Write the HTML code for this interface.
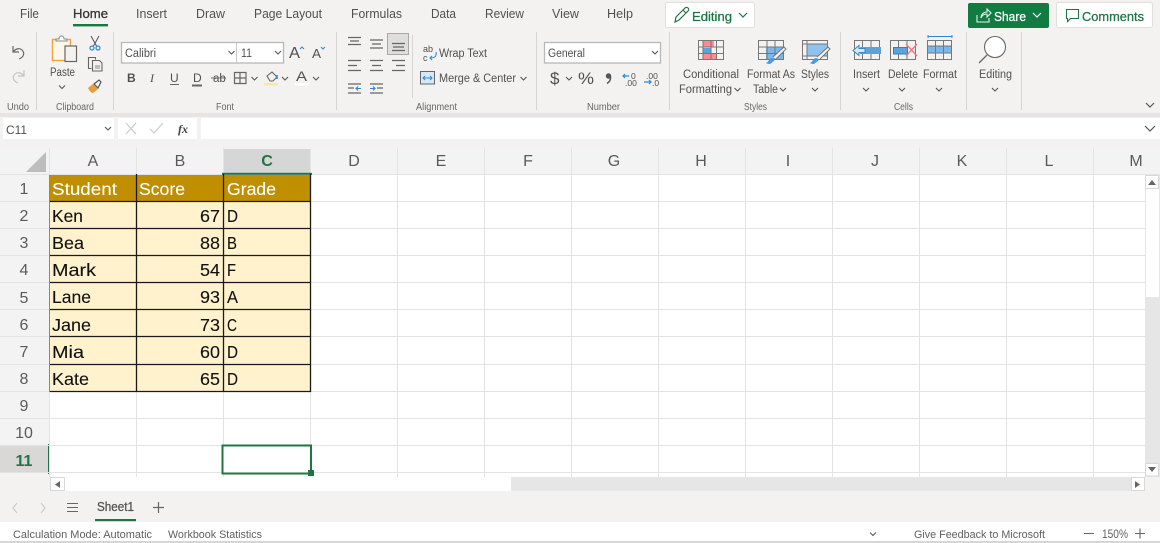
<!DOCTYPE html>
<html><head><meta charset="utf-8"><title>Excel</title>
<style>
html,body{margin:0;padding:0;background:#fff;width:1160px;height:543px;overflow:hidden}
svg{display:block;filter:blur(.3px)}
text{font-family:"Liberation Sans",sans-serif;fill:#505050}
.t{font-size:12.5px}
.r{font-size:11.5px}
.g{font-size:10px;fill:#666}
.c{font-size:17.5px;fill:#111;stroke:#111;stroke-width:.1px}
.w{font-size:17.5px;fill:#fff;stroke:#fff;stroke-width:.1px}
.h{font-size:16px;fill:#5a5a5a;text-anchor:middle}
.s{font-size:11px;fill:#5f5f5f}
.gt{font-size:12.5px;fill:#217346;stroke:#217346;stroke-width:.25px}
.i{fill:none;stroke:#666;stroke-width:1.2}
.b{fill:none;stroke:#666;stroke-width:1.1}
</style></head><body>
<svg width="1160" height="543" viewBox="0 0 1160 543" xmlns="http://www.w3.org/2000/svg">
<defs>
<path id="ch" d="M-3-1.5 0 1.500 3-1.500" fill="none" stroke="#555" stroke-width="1.100"/>
</defs>
<!-- base -->
<rect width="1160" height="543" fill="#fff"/>
<rect width="1160" height="113" fill="#f3f2f1"/>
<rect y="113" width="1160" height="4" fill="#e6e5e4"/>
<rect y="117" width="1160" height="31" fill="#f3f2f1"/>
<!-- tabs -->
<text class="t" x="20" y="18" textLength="19" lengthAdjust="spacingAndGlyphs">File</text>
<text class="t" x="73" y="18" textLength="35" lengthAdjust="spacingAndGlyphs" style="fill:#333;stroke:#333;stroke-width:.3px">Home</text>
<rect x="73" y="24" width="35" height="2.400" fill="#107c41"/>
<text class="t" x="136" y="18" textLength="31" lengthAdjust="spacingAndGlyphs">Insert</text>
<text class="t" x="196" y="18" textLength="29" lengthAdjust="spacingAndGlyphs">Draw</text>
<text class="t" x="254" y="18" textLength="68" lengthAdjust="spacingAndGlyphs">Page Layout</text>
<text class="t" x="351" y="18" textLength="51" lengthAdjust="spacingAndGlyphs">Formulas</text>
<text class="t" x="431" y="18" textLength="25" lengthAdjust="spacingAndGlyphs">Data</text>
<text class="t" x="485" y="18" textLength="39" lengthAdjust="spacingAndGlyphs">Review</text>
<text class="t" x="552" y="18" textLength="27" lengthAdjust="spacingAndGlyphs">View</text>
<text class="t" x="607" y="18" textLength="26" lengthAdjust="spacingAndGlyphs">Help</text>
<!-- Editing -->
<rect x="665.500" y="2.500" width="89" height="25" rx="2" fill="#fff" stroke="#e1dfdd"/>
<path d="M675 22l1-5 9-9a2 2 0 0 1 3 3l-9 9zM683 10l3 3" fill="none" stroke="#217346" stroke-width="1.200"/>
<text class="gt" x="692" y="21" textLength="40" lengthAdjust="spacingAndGlyphs">Editing</text>
<path d="M739 13l4 4 4-4" fill="none" stroke="#217346" stroke-width="1.200"/>
<!-- Share -->
<rect x="968" y="3" width="81" height="25" rx="2" fill="#107c41"/>
<path d="M977 15v7h12v-4M981 18c0-4 3-6 6-6v-3l4 4-4 4v-3c-3 0-5 1-6 4z" fill="none" stroke="#e8f2ec" stroke-width="1.100"/>
<text x="994" y="21" textLength="32" lengthAdjust="spacingAndGlyphs" style="fill:#fff;stroke:#fff;stroke-width:.25px;font-size:12.500px">Share</text>
<path d="M1033 13l4 4 4-4" fill="none" stroke="#fff" stroke-width="1.200"/>
<!-- Comments -->
<rect x="1056.500" y="2.500" width="96" height="25" rx="2" fill="#fff" stroke="#e1dfdd"/>
<path d="M1066.500 9.500h12v9h-8l-3 3v-3h-1z" fill="none" stroke="#217346" stroke-width="1.100"/>
<text class="gt" x="1082" y="21" textLength="62" lengthAdjust="spacingAndGlyphs">Comments</text>
<!-- separators -->
<g stroke="#d6d5d4">
<path d="M36.500 32V110M113.500 32V110M336.500 32V110M536.500 32V110M669.500 32V110M840.500 32V110M966.500 32V110M1021.500 32V110"/>
<path d="M412.500 35V98"/>
</g>
<!-- Undo -->
<path d="M13 46v6h6M13 52c3-4 7-4 9-2 3 3 2 7-3 9" class="i"/>
<path d="M24 70v6h-6M24 76c-3-4-7-4-9-2-3 3-2 7 3 9" fill="none" stroke="#c4c4c4" stroke-width="1.200"/>
<!-- Paste -->
<rect x="52.500" y="39.500" width="18" height="21" fill="#fdf6ea" stroke="#eda23f" stroke-width="1.400"/>
<path d="M56 41v-2h3c0-4 5-4 5 0h3v2z" fill="#fff" stroke="#888"/>
<rect x="65" y="46" width="11.500" height="15.500" fill="#f3f2f1" stroke="#666" stroke-width="1.200"/>
<text class="r" x="50" y="76" textLength="25" lengthAdjust="spacingAndGlyphs">Paste</text>
<use href="#ch" x="62" y="87"/>
<!-- Scissors -->
<path d="M91 36l5.500 10M99 36l-5.500 10" stroke="#555" fill="none"/>
<circle cx="92" cy="48" r="2" fill="none" stroke="#2b88d8" stroke-width="1.200"/>
<circle cx="98" cy="48" r="2" fill="none" stroke="#2b88d8" stroke-width="1.200"/>
<!-- Copy -->
<path d="M91.500 68.500h-3v-11h7v2" class="b"/>
<path d="M92.500 60.500h7l2.500 2.500v8h-9.500z" class="b"/>
<path d="M95 66h5M95 68h5" stroke="#888" fill="none"/>
<!-- Painter -->
<path d="M88 88l5-4 5 5-5 4c-2 0-4-3-5-5z" fill="#ed9a38"/>
<path d="M94 84l5-4 2 2-3 6z" fill="none" stroke="#555" stroke-width="1.200"/>
<!-- Font -->
<rect x="121.500" y="42.500" width="162" height="20.500" fill="#fff" stroke="#b8b8b8" stroke-width="1.300"/>
<path d="M236.500 43V63" stroke="#c8c8c8"/>
<text class="r" x="125" y="57" textLength="31" lengthAdjust="spacingAndGlyphs">Calibri</text>
<use href="#ch" x="231.500" y="52.500"/>
<text class="r" x="241" y="57" textLength="11" lengthAdjust="spacingAndGlyphs">11</text>
<use href="#ch" x="278" y="52.500"/>
<text x="289" y="58" style="font-size:16px" textLength="11" lengthAdjust="spacingAndGlyphs">A</text>
<path d="M300 49l2-2 2 2" fill="none" stroke="#2b88d8"/>
<text x="312" y="58" style="font-size:13px" textLength="9" lengthAdjust="spacingAndGlyphs">A</text>
<path d="M321 47l2 2 2-2" fill="none" stroke="#2b88d8"/>
<text x="127" y="82" style="font-size:12px;font-weight:bold">B</text>
<text x="150" y="82" style="font-size:12px;font-style:italic;font-family:'Liberation Serif',serif">I</text>
<text x="170" y="82" style="font-size:12px">U</text>
<path d="M170 84.500h9" stroke="#666"/>
<text x="193" y="82" style="font-size:12px">D</text>
<path d="M192 85.500h10" stroke="#666" stroke-width="2"/>
<text x="213" y="82" style="font-size:11.500px">ab</text>
<path d="M211 78h15" stroke="#666"/>
<path d="M234.500 72.500h11.500v11h-11.500zM240 72.500v11M234.500 78h11.500" class="i"/>
<use href="#ch" x="254.500" y="78.500"/>
<path d="M267 76l5-4 5 5-4 4h-3z" class="b"/>
<path d="M277 75v4" stroke="#2b88d8" stroke-width="1.500"/>
<rect x="264" y="83" width="14" height="2.500" fill="#f7e7ad"/>
<use href="#ch" x="285" y="78.500"/>
<text x="296" y="81" style="font-size:14px" textLength="11" lengthAdjust="spacingAndGlyphs">A</text>
<rect x="295" y="83" width="14" height="2.500" fill="#fff"/>
<use href="#ch" x="316" y="78.500"/>
<!-- Alignment -->
<rect x="387.500" y="33.500" width="21" height="21" fill="#dededd" stroke="#a8a8a8"/>
<g stroke="#666" stroke-width="1.300" fill="none">
<path d="M348 37.500h13M350 41h9M348 44.500h13"/>
<path d="M370 40h13M372 44h9M370 48h13"/>
<path d="M392 43.500h13M393 47h11M392 50.500h13"/>
<path d="M348 60.500h13M348 65.500h9M348 70.500h13"/>
<path d="M370 60.500h13M372 65.500h9M370 70.500h13"/>
<path d="M392 60.500h13M396 65.500h9M392 70.500h13"/>
<path d="M348 84h13M348 88h6M348 93h13"/>
<path d="M370 84h13M377 88h6M370 93h13"/>
</g>
<path d="M361 88.500h-5M358 86.500l-2 2 2 2M370 88.500h5M373 86.500l2 2-2 2" fill="none" stroke="#2b88d8" stroke-width="1.100"/>
<text x="423" y="52" style="font-size:9px">ab</text>
<text x="423" y="61" style="font-size:9px">c</text>
<path d="M436 52c1 5-2 6-6 6M432 56l-2 2 2 2" fill="none" stroke="#2b88d8" stroke-width="1.100"/>
<text class="r" x="439" y="57" textLength="48" lengthAdjust="spacingAndGlyphs">Wrap Text</text>
<rect x="420.500" y="71.500" width="14" height="12.500" fill="#d6e8f7" stroke="#666"/>
<path d="M423 78h9M425 76l-2 2 2 2M430 76l2 2-2 2" fill="none" stroke="#2b88d8"/>
<text class="r" x="439" y="82" textLength="77" lengthAdjust="spacingAndGlyphs">Merge &amp; Center</text>
<use href="#ch" x="523.500" y="78.500"/>
<!-- Number -->
<rect x="544.500" y="42.500" width="116" height="20.500" fill="#fff" stroke="#b8b8b8" stroke-width="1.300"/>
<text class="r" x="548" y="57" textLength="37" lengthAdjust="spacingAndGlyphs">General</text>
<use href="#ch" x="655" y="52.500"/>
<text x="550" y="84" style="font-size:17px">$</text>
<use href="#ch" x="569" y="78.500"/>
<text x="578" y="84" style="font-size:17px" textLength="16" lengthAdjust="spacingAndGlyphs">%</text>
<circle cx="608.500" cy="76" r="2.700" fill="#555"/>
<path d="M610.500 76.500c.3 3-1 5.500-3.500 7" fill="none" stroke="#555" stroke-width="1.500"/>
<text x="631" y="79" style="font-size:8.500px">0</text>
<text x="625" y="86" style="font-size:8.500px">.00</text>
<path d="M629 76h-6M625 74l-2 2 2 2" fill="none" stroke="#2b88d8" stroke-width="1.200"/>
<text x="646" y="79" style="font-size:8.500px">.00</text>
<text x="652" y="86" style="font-size:8.500px">.0</text>
<path d="M644 82h7M649 80l2 2-2 2" fill="none" stroke="#2b88d8" stroke-width="1.200"/>
<!-- CF icon -->
<rect x="703" y="41" width="11" height="6" fill="#f88b94"/>
<rect x="703" y="48" width="8" height="6" fill="#5ba3dd"/>
<rect x="703" y="54" width="14" height="6" fill="#f88b94"/>
<path d="M698.500 40.500h25v19h-25zM698.500 47h25M698.500 53.500h25M703 40.500v19M711 40.500v19M716.500 40.500v19" fill="none" stroke="#777"/>
<text class="r" x="683" y="78" textLength="56" lengthAdjust="spacingAndGlyphs">Conditional</text>
<text class="r" x="679" y="93" textLength="53" lengthAdjust="spacingAndGlyphs">Formatting</text>
<use href="#ch" x="737.500" y="89.500"/>
<!-- FT icon -->
<rect x="766" y="47" width="18" height="13" fill="#7ab8ec"/>
<path d="M758.500 40.500h25v19h-25zM758.500 47h25M758.500 53.500h25M767 40.500v19M775 40.500v19" fill="none" stroke="#777"/>
<path d="M770 64c-3 0-4-1-4-1 3-1 3-5 6-5 2 0 3 2 2 3z" fill="#4a9ce0"/>
<path d="M773 57l11-10 2 2-10 10" fill="#f3f2f1" stroke="#777"/>
<text class="r" x="747" y="78" textLength="48" lengthAdjust="spacingAndGlyphs">Format As</text>
<text class="r" x="753" y="93" textLength="25" lengthAdjust="spacingAndGlyphs">Table</text>
<use href="#ch" x="783" y="89.500"/>
<!-- Styles icon -->
<rect x="807" y="44" width="20" height="12" fill="#8fc3ef"/>
<path d="M802.500 40.500h25v19h-25zM802.500 44h25M802.500 56h25M807 40.500v19" fill="none" stroke="#777"/>
<path d="M814 64c-3 0-4-1-4-1 3-1 3-5 6-5 2 0 3 2 2 3z" fill="#4a9ce0"/>
<path d="M817 57l11-10 2 2-10 10" fill="#f3f2f1" stroke="#777"/>
<text class="r" x="801" y="78" textLength="28" lengthAdjust="spacingAndGlyphs">Styles</text>
<use href="#ch" x="815" y="89.500"/>
<!-- Insert -->
<path d="M854.500 40.500h25v19h-25zM862.500 40.500v19M871 40.500v19" fill="none" stroke="#777"/>
<rect x="860" y="47" width="21" height="7" fill="#5ba3dd"/>
<path d="M853 50.500l6-5v3h6v4h-6v3z" fill="#d6e8f7" stroke="#2b88d8"/>
<text class="r" x="853" y="78" textLength="27" lengthAdjust="spacingAndGlyphs">Insert</text>
<use href="#ch" x="866" y="89.500"/>
<!-- Delete -->
<path d="M890.500 40.500h25v19h-25zM898.500 40.500v19M907 40.500v19" fill="none" stroke="#777"/>
<rect x="893.500" y="47.500" width="14" height="6.500" fill="#5ba3dd" stroke="#3a7fb8"/>
<path d="M906 44l11 12M917 44l-11 12" stroke="#f4747f" stroke-width="1.300"/>
<text class="r" x="888" y="78" textLength="30" lengthAdjust="spacingAndGlyphs">Delete</text>
<use href="#ch" x="902" y="89.500"/>
<!-- Format -->
<rect x="928" y="46" width="24" height="7" fill="#7ab8ec"/>
<path d="M927.500 40.500h24v19h-24zM927.500 46h24M927.500 53h24M935.500 40.500v19M943.500 40.500v19" fill="none" stroke="#777"/>
<path d="M928 36.500h24M928 35v3M952 35v3" stroke="#2b88d8" fill="none"/>
<text class="r" x="923" y="78" textLength="34" lengthAdjust="spacingAndGlyphs">Format</text>
<use href="#ch" x="939" y="89.500"/>
<!-- Find -->
<circle cx="995" cy="47" r="10.500" fill="#fff" stroke="#666" stroke-width="1.100"/>
<path d="M987 55l-5 5-3 3" stroke="#666" stroke-width="1.300" fill="none"/>
<text class="r" x="979" y="78" textLength="33" lengthAdjust="spacingAndGlyphs">Editing</text>
<use href="#ch" x="995" y="89.500"/>
<path d="M1146 103l4 4 4-4" fill="none" stroke="#555" stroke-width="1.200"/>
<!-- group labels -->
<text class="g" x="7" y="110" textLength="22" lengthAdjust="spacingAndGlyphs">Undo</text>
<text class="g" x="56" y="110" textLength="38" lengthAdjust="spacingAndGlyphs">Clipboard</text>
<text class="g" x="216" y="110" textLength="18" lengthAdjust="spacingAndGlyphs">Font</text>
<text class="g" x="416" y="110" textLength="41" lengthAdjust="spacingAndGlyphs">Alignment</text>
<text class="g" x="587" y="110" textLength="33" lengthAdjust="spacingAndGlyphs">Number</text>
<text class="g" x="744" y="110" textLength="23" lengthAdjust="spacingAndGlyphs">Styles</text>
<text class="g" x="894" y="110" textLength="19" lengthAdjust="spacingAndGlyphs">Cells</text>
<!-- formula bar -->
<rect x="3" y="118" width="111" height="21" fill="#fff"/>
<rect x="118" y="118" width="79" height="21" fill="#fff"/>
<rect x="201" y="118" width="959" height="21" fill="#fff"/>
<text x="6" y="134" style="font-size:12px" textLength="21" lengthAdjust="spacingAndGlyphs">C11</text>
<use href="#ch" x="108" y="128.500"/>
<path d="M126 123l10 11M136 123l-10 11M150 129l4 4 9-10" fill="none" stroke="#c8c8c8" stroke-width="1.100"/>
<text x="178" y="133" style="font-size:12px;font-style:italic;font-weight:bold;font-family:'Liberation Serif',serif;fill:#444">fx</text>
<path d="M1145 126l5 5 5-5" fill="none" stroke="#555" stroke-width="1.200"/>
<!-- headers -->
<rect y="148" width="1160" height="26" fill="#f3f3f3"/>
<rect y="174" width="49" height="303" fill="#f3f3f3"/>
<path d="M26 172h20v-20z" fill="#bdbdbd"/>
<rect x="224" y="149" width="87" height="24" fill="#d6d6d6"/>
<rect y="445" width="49" height="28" fill="#d9d8d6"/>
<rect x="48" y="444" width="2" height="30" fill="#217346"/>
<!-- grid -->
<g stroke="#e3e3e3" fill="none">
<path d="M49.500 148V477M136.500 148V477M223.500 148V477M310.500 148V477M397.500 148V477M484.500 148V477M571.500 148V477M658.500 148V477M745.500 148V477M832.500 148V477M919.500 148V477M1006.500 148V477M1093.500 148V477"/>
<path d="M0 174.500H1145M0 201.500H1145M0 228.500H1145M0 255.500H1145M0 282.500H1145M0 309.500H1145M0 336.500H1145M0 364.500H1145M0 391.500H1145M0 418.500H1145M0 445.500H1145M0 472.500H1145"/>
</g>
<rect x="222" y="172.800" width="90" height="2" fill="#217346"/>
<g>
<text class="h" x="93" y="166">A</text><text class="h" x="180" y="166">B</text>
<text class="h" x="267" y="166" style="fill:#217346;font-weight:bold">C</text>
<text class="h" x="354" y="166">D</text><text class="h" x="441" y="166">E</text><text class="h" x="528" y="166">F</text><text class="h" x="614" y="166">G</text><text class="h" x="701" y="166">H</text><text class="h" x="788" y="166">I</text><text class="h" x="875" y="166">J</text><text class="h" x="962" y="166">K</text><text class="h" x="1049" y="166">L</text><text class="h" x="1136" y="166">M</text>
<text class="h" x="24" y="194">1</text><text class="h" x="24" y="221">2</text><text class="h" x="24" y="248">3</text><text class="h" x="24" y="275">4</text><text class="h" x="24" y="303">5</text><text class="h" x="24" y="330">6</text><text class="h" x="24" y="357">7</text><text class="h" x="24" y="384">8</text><text class="h" x="24" y="411">9</text><text class="h" x="24" y="438">10</text>
<text class="h" x="24" y="466" style="fill:#217346;font-weight:bold">11</text>
</g>
<!-- table -->
<rect x="50" y="175" width="261" height="27" fill="#bf8f00"/>
<rect x="50" y="202" width="261" height="189" fill="#fff2cc"/>
<g stroke="#1a1a1a" stroke-width="1.300" fill="none">
<path d="M136.500 174V392M223.500 174V392M310.500 174V392"/>
<path d="M50 201.500H311M50 228.500H311M50 255.500H311M50 282.500H311M50 309.500H311M50 336.500H311M50 364.500H311M50 391.500H311"/>
</g>
<path d="M49.500 175V392" stroke="#8a8a70"/>
<text class="w" x="52" y="195" textLength="65" lengthAdjust="spacingAndGlyphs">Student</text>
<text class="w" x="139" y="195" textLength="46" lengthAdjust="spacingAndGlyphs">Score</text>
<text class="w" x="227" y="195" textLength="49" lengthAdjust="spacingAndGlyphs">Grade</text>
<text class="c" x="52" y="222" textLength="31" lengthAdjust="spacingAndGlyphs">Ken</text>
<text class="c" x="52" y="249" textLength="32" lengthAdjust="spacingAndGlyphs">Bea</text>
<text class="c" x="52" y="276" textLength="44" lengthAdjust="spacingAndGlyphs">Mark</text>
<text class="c" x="52" y="303" textLength="39" lengthAdjust="spacingAndGlyphs">Lane</text>
<text class="c" x="52" y="331" textLength="39" lengthAdjust="spacingAndGlyphs">Jane</text>
<text class="c" x="52" y="358" textLength="32" lengthAdjust="spacingAndGlyphs">Mia</text>
<text class="c" x="52" y="385" textLength="37" lengthAdjust="spacingAndGlyphs">Kate</text>
<g>
<text class="c" x="200" y="222" textLength="20" lengthAdjust="spacingAndGlyphs">67</text>
<text class="c" x="200" y="249" textLength="20" lengthAdjust="spacingAndGlyphs">88</text>
<text class="c" x="200" y="276" textLength="20" lengthAdjust="spacingAndGlyphs">54</text>
<text class="c" x="200" y="303" textLength="20" lengthAdjust="spacingAndGlyphs">93</text>
<text class="c" x="200" y="331" textLength="20" lengthAdjust="spacingAndGlyphs">73</text>
<text class="c" x="200" y="358" textLength="20" lengthAdjust="spacingAndGlyphs">60</text>
<text class="c" x="200" y="385" textLength="20" lengthAdjust="spacingAndGlyphs">65</text>
</g>
<text class="c" x="227" y="222" textLength="11" lengthAdjust="spacingAndGlyphs">D</text>
<text class="c" x="227" y="249" textLength="10" lengthAdjust="spacingAndGlyphs">B</text>
<text class="c" x="227" y="276" textLength="9" lengthAdjust="spacingAndGlyphs">F</text>
<text class="c" x="227" y="303" textLength="11" lengthAdjust="spacingAndGlyphs">A</text>
<text class="c" x="227" y="331" textLength="10" lengthAdjust="spacingAndGlyphs">C</text>
<text class="c" x="227" y="358" textLength="11" lengthAdjust="spacingAndGlyphs">D</text>
<text class="c" x="227" y="385" textLength="11" lengthAdjust="spacingAndGlyphs">D</text>
<!-- selection -->
<rect x="222.500" y="445.500" width="88.500" height="28" fill="#fff" stroke="#217346" stroke-width="2"/>
<rect x="308" y="470" width="6" height="6" fill="#217346"/>
<!-- vertical scrollbar -->
<rect x="1145" y="174" width="15" height="303" fill="#e6e6e6"/>
<rect x="1145.500" y="175.500" width="13" height="13" fill="#fff" stroke="#d8d8d8"/>
<path d="M1148 185l4-5 4 5z" fill="#666"/>
<rect x="1146" y="189" width="13" height="108" fill="#fff"/>
<rect x="1145.500" y="463.500" width="13" height="12.500" fill="#fff" stroke="#d8d8d8"/>
<path d="M1148 467l4 5 4-5z" fill="#666"/>
<!-- horizontal scrollbar -->
<rect x="0" y="477" width="1160" height="14" fill="#f3f2f1"/>
<rect x="50" y="477" width="1095" height="14" fill="#e6e6e6"/>
<rect x="50.500" y="477.500" width="14" height="13" fill="#fff" stroke="#d8d8d8"/>
<path d="M60 481l-5 3.500 5 3.500z" fill="#666"/>
<rect x="65" y="477" width="446" height="14" fill="#fff"/>
<rect x="1131.500" y="477.500" width="13" height="13" fill="#fff" stroke="#d8d8d8"/>
<path d="M1135 481l5 3.500-5 3.500z" fill="#666"/>
<!-- sheet tabs -->
<rect y="491" width="1160" height="31" fill="#f3f2f1"/>
<path d="M17 503l-4 5 4 5M41 503l4 5-4 5" fill="none" stroke="#c8c8c8" stroke-width="1.100"/>
<path d="M67 503.500h11M67 507.500h11M67 511.500h11" stroke="#666" fill="none"/>
<text x="97" y="511" style="font-size:12.500px;fill:#555;stroke:#555;stroke-width:.3px" textLength="37" lengthAdjust="spacingAndGlyphs">Sheet1</text>
<rect x="95" y="519" width="41" height="2.200" fill="#217346"/>
<path d="M153 507.500h11M158.500 502v11" stroke="#666" fill="none" stroke-width="1.200"/>
<!-- status -->
<rect y="522" width="1160" height="19" fill="#fff"/>
<rect y="541" width="1160" height="2" fill="#d6d6d6"/>
<text class="s" x="13" y="538" textLength="139" lengthAdjust="spacingAndGlyphs">Calculation Mode: Automatic</text>
<text class="s" x="168" y="538" textLength="94" lengthAdjust="spacingAndGlyphs">Workbook Statistics</text>
<use href="#ch" x="873" y="534"/>
<text class="s" x="914" y="538" textLength="131" lengthAdjust="spacingAndGlyphs">Give Feedback to Microsoft</text>
<path d="M1084 533.500h10M1135 533.500h10M1140 528.500v10" stroke="#666" fill="none" stroke-width="1.100"/>
<text class="s" x="1102" y="538" style="font-size:12px" textLength="26" lengthAdjust="spacingAndGlyphs">150%</text>
</svg>
</body></html>
